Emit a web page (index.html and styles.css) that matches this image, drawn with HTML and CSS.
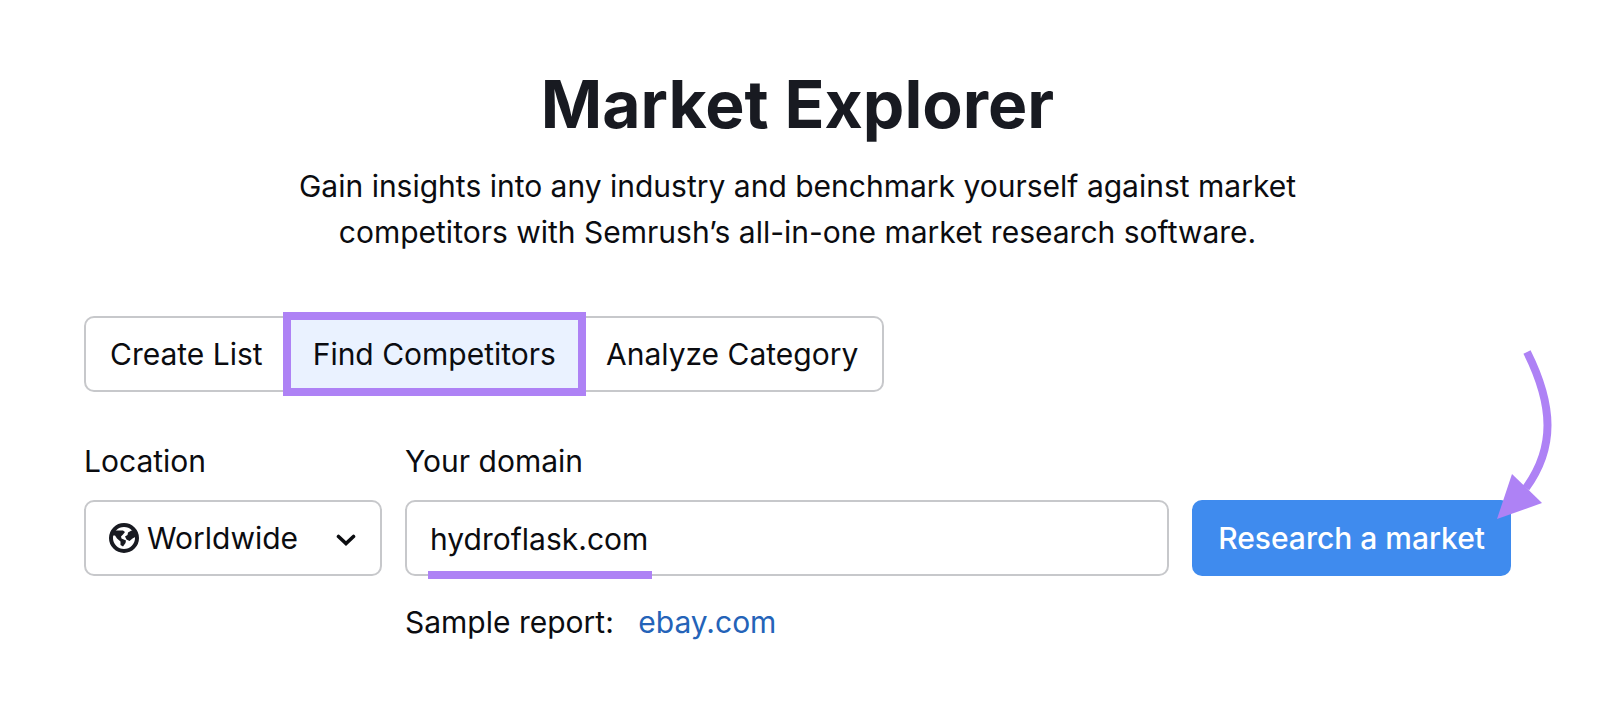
FILE: index.html
```html
<!DOCTYPE html>
<html lang="en">
<head>
<meta charset="utf-8">
<meta name="viewport" content="width=device-width, initial-scale=1">
<title>Market Explorer</title>
<link rel="stylesheet" href="styles.css">
</head>
<body>
<main class="page">
  <header class="intro">
    <h1 class="title">Market Explorer</h1>
    <p class="lead">Gain insights into any industry and benchmark yourself against market competitors with Semrush’s all-in-one market research software.</p>
  </header>

  <div class="tabs">
    <button class="tab" type="button">Create List</button>
    <button class="tab tab-active" type="button">Find Competitors</button>
    <button class="tab" type="button">Analyze Category</button>
  </div>

  <form class="form">
    <div class="field field-location">
      <label class="label" for="location">Location</label>
      <div class="select-box">
        <select class="control select" id="location"><option>Worldwide</option></select>
        <svg class="globe" viewBox="0 0 30 30" width="30" height="30" aria-hidden="true">
          <circle cx="15" cy="15" r="13" fill="none" stroke="currentColor" stroke-width="4"/>
          <path fill="currentColor" d="M3 9 6 7.500 14 7.500 16 9 14 11.500 12 13.500 12.500 15.500 17 17.500 16.500 20 14 23.500 11.500 22 11.500 18.500 8 15.500 6 12.500 2 12.500Z"/>
          <path fill="currentColor" d="M27 8 22.500 7.500 19 9.500 18.500 12 16 13.500 17.500 16.500 20.500 18 23.500 15.500 28 13Z"/>
        </svg>
        <svg class="chevron" viewBox="0 0 20 14" width="20" height="14" aria-hidden="true">
          <path d="M2.500 3.500 10 10.500 17.500 3.500" fill="none" stroke="currentColor" stroke-width="3.600" stroke-linecap="round"/>
        </svg>
      </div>
    </div>

    <div class="field field-domain">
      <label class="label" for="domain">Your domain</label>
      <div class="input-box">
        <input class="control input" id="domain" type="text" value="hydroflask.com">
        <span class="underline"></span>
      </div>
      <p class="sample">Sample report: <a class="link" href="#">ebay.com</a></p>
    </div>

    <div class="action">
      <button class="submit" type="button">Research a market</button>
      <svg class="arrow" viewBox="0 0 70 180" width="70" height="180" aria-hidden="true">
        <path d="M36 6C63 60 64 102 35 142" fill="none" stroke="currentColor" stroke-width="8"/>
        <path d="M6 173 21 128 51 157Z" fill="currentColor"/>
      </svg>
    </div>
  </form>
</main>
</body>
</html>
```
FILE: styles.css
```css
* {
  box-sizing: border-box;
}

body {
  margin: 0;
  background: #fff;
  color: #0b0c10;
  font: 30px/46px Inter, "Liberation Sans", sans-serif;
}

.page {
  padding: 60px 89px 48px 84px;
}

.intro {
  text-align: center;
}

.title {
  margin: 0;
  font-size: 66px;
  line-height: 88px;
  font-weight: 700;
  color: #181a21;
}

.lead {
  max-width: 1030px;
  margin: 15px auto 0;
}

.tabs {
  display: flex;
  gap: 2px;
  width: max-content;
  margin-top: 61px;
  border: 2px solid #c7c8cb;
  border-radius: 10px;
}

.tab {
  padding: 13px 24px;
  border: 0;
  background: none;
  color: inherit;
  font: inherit;
}

.tab-active {
  background: #eaf2ff;
  outline: 8px solid #ae82f5;
  outline-offset: -2px;
}

.form {
  display: flex;
  align-items: flex-start;
  gap: 23px;
  margin-top: 46px;
}

.field {
  display: flex;
  flex-direction: column;
}

.field-location {
  width: 298px;
}

.field-domain {
  flex: 1;
}

.label {
  margin-bottom: 16px;
}

.control {
  width: 100%;
  height: 76px;
  border: 2px solid #c7c8cb;
  border-radius: 10px;
  background: #fff;
  color: inherit;
  font: inherit;
}

.select-box {
  display: grid;
  align-items: center;
}

.select-box > * {
  grid-area: 1 / 1;
}

.select {
  appearance: none;
  padding: 0 48px 0 61px;
}

.globe {
  margin-left: 25px;
  color: #181a21;
  pointer-events: none;
}

.chevron {
  justify-self: end;
  margin: 4px 26px 0 0;
  pointer-events: none;
}

.input-box {
  position: relative;
}

.input {
  display: block;
  padding: 2px 23px 0;
}

.underline {
  position: absolute;
  left: 23px;
  bottom: -3px;
  width: 224px;
  height: 8px;
  background: #ae82f5;
}

.sample {
  margin: 23px 0 0;
}

.link {
  margin-left: 16px;
  color: #2463b8;
  text-decoration: none;
}

.action {
  position: relative;
  margin-top: 62px;
}

.submit {
  height: 76px;
  padding: 0 26px;
  border: 0;
  border-radius: 10px;
  background: #3f8bee;
  color: #fff;
  font: inherit;
  font-weight: 500;
}

.arrow {
  position: absolute;
  top: -154px;
  right: -50px;
  color: #ae82f5;
}
```
